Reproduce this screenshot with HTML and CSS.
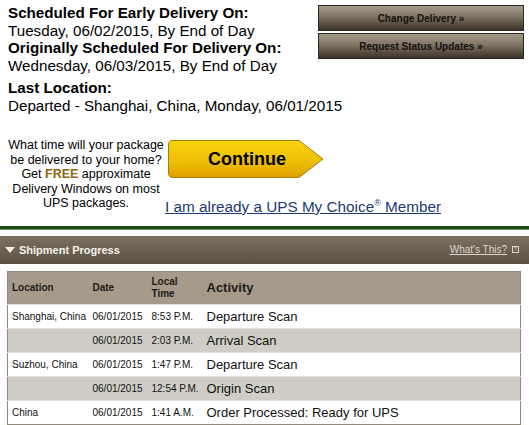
FILE: index.html
```html
<!DOCTYPE html>
<html>
<head>
<meta charset="utf-8">
<link rel="stylesheet" href="styles.css">
</head>
<body>
<div class="top">
  <div class="actions">
    <a class="btn-brown" href="#">Change Delivery »</a>
    <a class="btn-brown" href="#">Request Status Updates »</a>
  </div>
  <div class="status">
    <div class="label">Scheduled For Early Delivery On:</div>
    <div>Tuesday, 06/02/2015, By End of Day</div>
    <div class="label">Originally Scheduled For Delivery On:</div>
    <div>Wednesday, 06/03/2015, By End of Day</div>
    <div class="label gap">Last Location:</div>
    <div>Departed - Shanghai, China, Monday, 06/01/2015</div>
  </div>
</div>

<div class="promo">
  <p class="promo-text">What time will your package be delivered to your home? Get <b class="free">FREE</b> approximate Delivery Windows on most UPS packages.</p>
  <div class="promo-right">
    <a class="btn-continue" href="#">
      <svg class="arrow" width="156" height="38" viewBox="0 0 156 38">
        <defs>
          <linearGradient id="gold" x1="0" y1="0" x2="0" y2="1">
            <stop offset="0" stop-color="#f7d40c"/>
            <stop offset="0.55" stop-color="#edbf06"/>
            <stop offset="1" stop-color="#dfa200"/>
          </linearGradient>
        </defs>
        <path d="M5 0.5 H131 L155 19 L131 37.5 H5 Q0.5 37.5 0.5 33 V5 Q0.5 0.5 5 0.5 Z" fill="url(#gold)" stroke="#a67c0a" stroke-width="1"/>
      </svg>
      <span>Continue</span>
    </a>
    <a class="mychoice" href="#">I am already a UPS My Choice<sup>®</sup> Member</a>
  </div>
</div>

<div class="rule"></div>

<div class="section-head">
  <div class="title"><span class="tri"></span>Shipment Progress</div>
  <div class="help"><a href="#">What's This?</a><span class="qbox">?</span></div>
</div>

<table class="progress">
  <colgroup>
    <col class="c-loc"><col class="c-date"><col class="c-time"><col>
  </colgroup>
  <thead>
    <tr>
      <th>Location</th>
      <th>Date</th>
      <th>Local<br>Time</th>
      <th class="act">Activity</th>
    </tr>
  </thead>
  <tbody>
    <tr><td>Shanghai, China</td><td>06/01/2015</td><td>8:53 P.M.</td><td class="act">Departure Scan</td></tr>
    <tr class="alt"><td></td><td>06/01/2015</td><td>2:03 P.M.</td><td class="act">Arrival Scan</td></tr>
    <tr><td>Suzhou, China</td><td>06/01/2015</td><td>1:47 P.M.</td><td class="act">Departure Scan</td></tr>
    <tr class="alt"><td></td><td>06/01/2015</td><td>12:54 P.M.</td><td class="act">Origin Scan</td></tr>
    <tr><td>China</td><td>06/01/2015</td><td>1:41 A.M.</td><td class="act">Order Processed: Ready for UPS</td></tr>
  </tbody>
</table>
</body>
</html>
```

FILE: styles.css
```css
html, body {
  margin: 0;
  padding: 0;
  background: #ffffff;
}
body {
  font-family: "Liberation Sans", Arial, sans-serif;
  color: #000;
  width: 529px;
  overflow: hidden;
}
a { color: inherit; }

.top {
  padding: 4px 5px 0 8px;
}
.top::after {
  content: "";
  display: block;
  clear: both;
}
.status {
  font-size: 15.2px;
  line-height: 17.5px;
  white-space: nowrap;
}
.status .label { font-weight: bold; }
.status .gap { margin-top: 5px; }

.actions {
  float: right;
  display: flex;
  flex-direction: column;
  gap: 2px;
  margin-top: 1px;
}
.btn-brown {
  display: flex;
  align-items: center;
  justify-content: center;
  width: 204px;
  height: 24px;
  border: 1px solid #2f271f;
  background: linear-gradient(#a49a89 0%, #857a6a 40%, #5a4f42 75%, #3d3329 100%);
  color: #141210;
  font-size: 10px;
  font-weight: bold;
  text-decoration: none;
}

.promo {
  display: flex;
  align-items: flex-start;
  margin-top: 24px;
  padding-left: 6px;
}
.promo-text {
  margin: 0;
  width: 160px;
  text-align: center;
  font-size: 12.5px;
  line-height: 14.6px;
}
.free { color: #8a6614; }
.promo-right {
  display: flex;
  flex-direction: column;
  align-items: flex-start;
  margin-top: 2px;
  margin-left: -1px;
}
.btn-continue {
  position: relative;
  display: flex;
  align-items: center;
  justify-content: flex-start;
  width: 156px;
  height: 38px;
  margin-left: 3px;
  text-decoration: none;
  color: #000;
}
.btn-continue .arrow {
  position: absolute;
  left: 0;
  top: 0;
}
.btn-continue span {
  position: relative;
  margin-left: 40px;
  font-size: 18px;
  font-weight: bold;
}
.mychoice {
  margin-top: 20px;
  font-size: 15.3px;
  line-height: 17.5px;
  color: #1b3b78;
  text-decoration: underline;
}
.mychoice sup {
  font-size: 9px;
  vertical-align: 6px;
  line-height: 0;
}

.rule {
  margin-top: 10px;
  height: 3px;
  background: #1f4519;
  border-bottom: 1px solid #67984f;
}

.section-head {
  margin-top: 6px;
  height: 28px;
  display: flex;
  align-items: center;
  justify-content: space-between;
  padding: 0 10px 0 5px;
  background: linear-gradient(#7c7062, #5c5044);
}
.section-head .title {
  display: flex;
  align-items: center;
  color: #f4f1ea;
  font-size: 11px;
  font-weight: bold;
}
.tri {
  width: 0;
  height: 0;
  border-left: 5px solid transparent;
  border-right: 5px solid transparent;
  border-top: 6px solid #f4f1ea;
  margin-right: 4px;
  margin-top: 1px;
}
.help {
  display: flex;
  align-items: center;
  font-size: 10px;
  color: #ddd7ca;
}
.help a { text-decoration: underline; }
.qbox {
  width: 5px;
  height: 5px;
  margin-left: 5px;
  border: 1px solid #ddd7ca;
  font-size: 5px;
  line-height: 5px;
  text-align: center;
  overflow: hidden;
}

.progress {
  margin: 7px 0 0 7px;
  width: 514px;
  border-collapse: collapse;
  table-layout: fixed;
  border: 1px solid #8e877b;
}
.c-loc { width: 81px; }
.c-date { width: 59px; }
.c-time { width: 55px; }
.progress th {
  background: #a69b8b;
  height: 32px;
  padding: 0 0 0 4px;
  text-align: left;
  font-size: 10px;
  line-height: 12px;
  font-weight: bold;
  color: #1e1b17;
  vertical-align: middle;
}
.progress th.act { font-size: 13px; }
.progress td {
  height: 23px;
  padding: 0 0 0 4px;
  font-size: 10px;
  color: #111;
  vertical-align: middle;
  border-top: 1px solid #e2e0da;
  white-space: nowrap;
}
.progress td.act { font-size: 13px; }
.progress tr.alt td { background: #d0cec4; }
```
